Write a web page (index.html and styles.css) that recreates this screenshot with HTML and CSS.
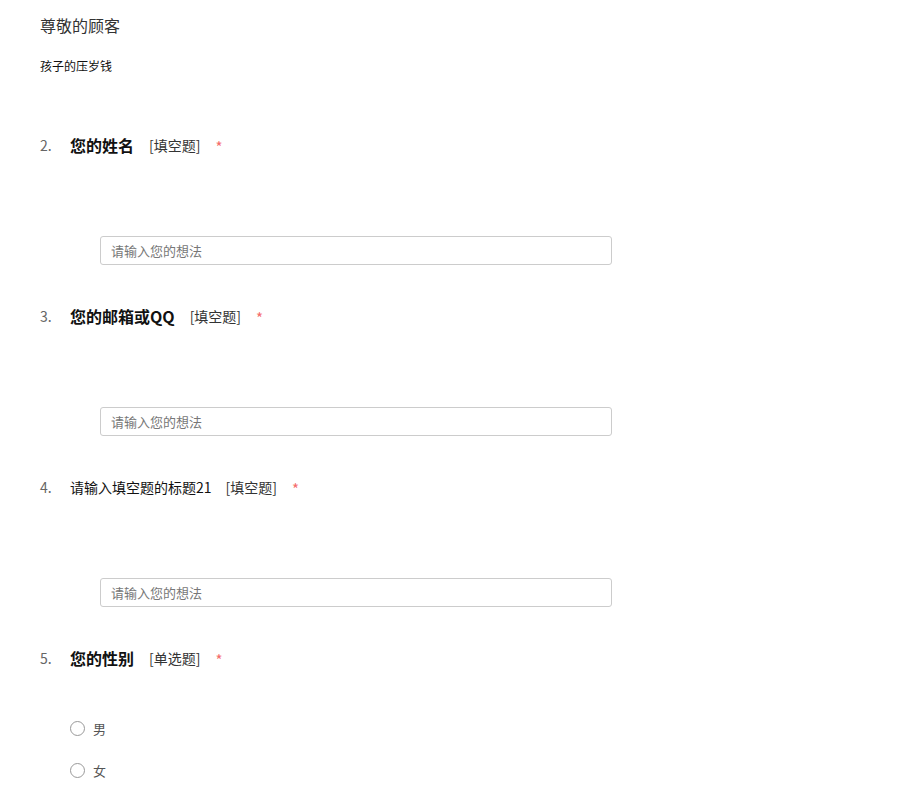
FILE: index.html
```html
<!DOCTYPE html>
<html lang="zh-CN">
<head>
  <meta charset="UTF-8">
  <title>问卷</title>
  <link rel="stylesheet" href="styles.css">
</head>
<body>
  <div class="survey">
    <h1 class="survey-title">尊敬的顾客</h1>
    <p class="survey-desc">孩子的压岁钱</p>

    <div class="question">
      <div class="q-head">
        <span class="q-num">2.</span>
        <span class="q-title bold">您的姓名</span>
        <span class="q-type">[填空题]</span>
        <span class="q-req">*</span>
      </div>
      <input class="q-input" type="text" placeholder="请输入您的想法">
    </div>

    <div class="question">
      <div class="q-head">
        <span class="q-num">3.</span>
        <span class="q-title bold">您的邮箱或QQ</span>
        <span class="q-type">[填空题]</span>
        <span class="q-req">*</span>
      </div>
      <input class="q-input" type="text" placeholder="请输入您的想法">
    </div>

    <div class="question">
      <div class="q-head">
        <span class="q-num">4.</span>
        <span class="q-title">请输入填空题的标题21</span>
        <span class="q-type">[填空题]</span>
        <span class="q-req">*</span>
      </div>
      <input class="q-input" type="text" placeholder="请输入您的想法">
    </div>

    <div class="question">
      <div class="q-head">
        <span class="q-num">5.</span>
        <span class="q-title bold">您的性别</span>
        <span class="q-type">[单选题]</span>
        <span class="q-req">*</span>
      </div>
      <div class="options">
        <label class="option"><span class="radio"></span>男</label>
        <label class="option"><span class="radio"></span>女</label>
      </div>
    </div>
  </div>
</body>
</html>
```

FILE: styles.css
```css
body {
  margin: 0;
  padding: 0;
  background: #fff;
  color: #333;
  font-family: "Noto Sans CJK SC", "Noto Sans", sans-serif;
}

.survey {
  padding: 13px 0 0 40px;
}

.survey-title {
  margin: 0;
  font-size: 16px;
  font-weight: normal;
  line-height: 24px;
  color: #333;
}

.survey-desc {
  margin: 20px 0 0;
  font-size: 12px;
  line-height: 18px;
  color: #111;
}

.question {
  margin-top: 58px;
}

.question + .question {
  margin-top: 39px;
}

.q-head {
  display: flex;
  align-items: center;
  height: 24px;
}

.q-num {
  width: 30px;
  font-size: 14px;
  color: #666;
}

.q-title {
  font-size: 14px;
  color: #111;
  margin-right: 14px;
}

.q-title.bold {
  font-size: 16px;
  font-weight: bold;
  margin-right: 15px;
}

.q-type {
  font-size: 14px;
  color: #333;
}

.q-req {
  margin-left: 15px;
  font-size: 15px;
  line-height: 24px;
  padding-top: 4px;
  color: #f56c6c;
}

.q-input {
  display: block;
  box-sizing: border-box;
  margin: 79px 0 0 60px;
  width: 512px;
  height: 29px;
  padding: 0 10px;
  border: 1px solid #ccc;
  border-radius: 3px;
  font-family: inherit;
  font-size: 13px;
  color: #333;
  outline: none;
}

.q-input::placeholder {
  color: #777;
}

.options {
  margin: 48px 0 0 30px;
  display: flex;
  flex-direction: column;
  gap: 22px;
}

.option {
  display: flex;
  align-items: center;
  height: 20px;
  font-size: 13px;
  color: #555;
}

.radio {
  box-sizing: border-box;
  width: 15px;
  height: 15px;
  margin-right: 8px;
  border: 1px solid #999;
  border-radius: 50%;
}
```
